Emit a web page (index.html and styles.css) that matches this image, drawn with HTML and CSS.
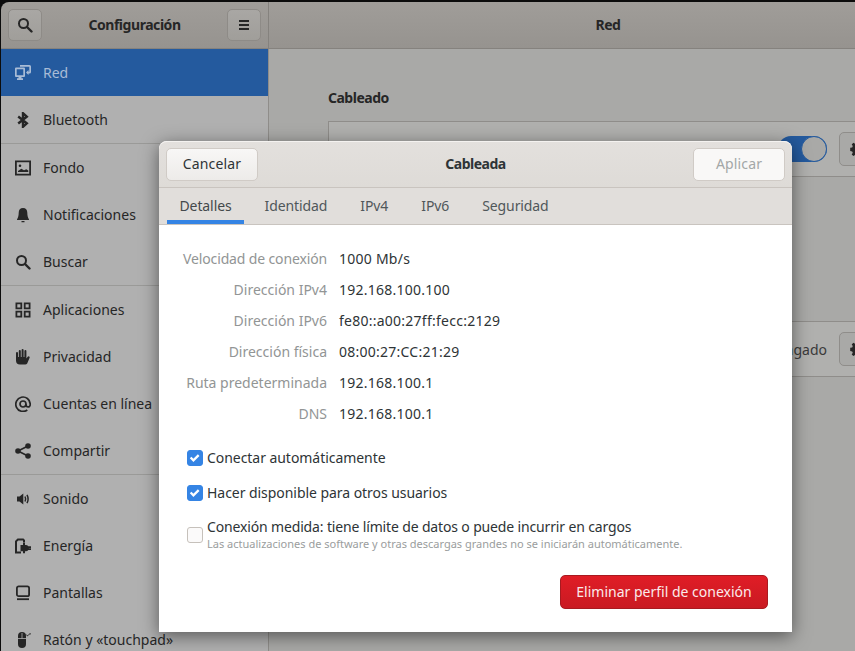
FILE: index.html
```html
<!DOCTYPE html>
<html lang="es">
<head>
    <meta charset="UTF-8">
    <title>Configuración - Red</title>
    <link rel="stylesheet" href="styles.css">
</head>
<body>
    <div class="window">
        <header class="headerbar">
            <div class="header-left">
                <button class="icon-button">
                    <svg class="icon" viewBox="0 0 16 16"><circle cx="6.5" cy="6.5" r="4.5" fill="none" stroke="currentColor" stroke-width="2"/><path d="M10 10l4.5 4.5" stroke="currentColor" stroke-width="2.4" stroke-linecap="round"/></svg>
                </button>
                <div class="header-title">Configuración</div>
                <button class="icon-button">
                    <svg class="icon" viewBox="0 0 16 16"><path d="M3 3h10v2H3zM3 7h10v2H3zM3 11h10v2H3z" fill="currentColor"/></svg>
                </button>
            </div>
            <div class="header-right">
                <div class="header-title">Red</div>
            </div>
        </header>

        <div class="content">
            <nav class="sidebar">
                <div class="nav-item selected">
                    <svg class="icon" viewBox="0 0 16 16"><path d="M0 3.500a1 1 0 0 1 1-1h8a1 1 0 0 1 1 1V11a1 1 0 0 1-1 1H6.500v1.300H8V15H2v-1.700h1.500V12H1a1 1 0 0 1-1-1zM1.700 4.200v6.100h6.600V4.200z" fill="currentColor" fill-rule="evenodd"/><path d="M5 0h9.500A1.500 1.500 0 0 1 16 1.500V7a1.500 1.500 0 0 1-1.500 1.500H13.500V10L11 7.500 13.500 5v1.800h.8V1.700H5z" fill="currentColor"/></svg>
                    <span>Red</span>
                </div>
                <div class="nav-item">
                    <svg class="icon" viewBox="0 0 16 16"><path d="M3.200 4.500L11.800 11.300 8 14.800V1.200l3.800 3.500L3.200 11.500" fill="none" stroke="currentColor" stroke-width="2.400"/></svg>
                    <span>Bluetooth</span>
                </div>
                <div class="nav-item divided">
                    <svg class="icon" viewBox="0 0 16 16"><path d="M0 .5h16v15H0zM1.800 2.300v11.400h12.400V2.300z" fill="currentColor" fill-rule="evenodd"/><circle cx="5" cy="5.800" r="1.300" fill="currentColor"/><path d="M3 11l3.300-2.300 2.700 1.500 2.300-1 2 1.300v1.500H3z" fill="currentColor"/></svg>
                    <span>Fondo</span>
                </div>
                <div class="nav-item">
                    <svg class="icon" viewBox="0 0 16 16"><path d="M8 1c2.800 0 4.300 2 4.300 4.800 0 3 .6 5 1.700 6.700v.5H2v-.5C3.100 10.800 3.700 8.800 3.700 5.800 3.700 3 5.200 1 8 1zM6.500 14h3v1.200h-3z" fill="currentColor"/></svg>
                    <span>Notificaciones</span>
                </div>
                <div class="nav-item">
                    <svg class="icon" viewBox="0 0 16 16"><circle cx="6.500" cy="6.500" r="4.500" fill="none" stroke="currentColor" stroke-width="2"/><path d="M10 10l4.500 4.500" stroke="currentColor" stroke-width="2.400" stroke-linecap="round"/></svg>
                    <span>Buscar</span>
                </div>
                <div class="nav-item divided">
                    <svg class="icon" viewBox="0 0 16 16"><path d="M.5.5h6.700v6.700H.5zM2.300 2.300v3.100h3.100V2.300zM8.800.5h6.700v6.700H8.800zM10.600 2.300v3.100h3.100V2.300zM.5 8.800h6.700v6.700H.5zM2.300 10.600v3.100h3.100v-3.100zM8.800 8.800h6.700v6.700H8.800zM10.600 10.600v3.100h3.100v-3.100z" fill="currentColor" fill-rule="evenodd"/></svg>
                    <span>Aplicaciones</span>
                </div>
                <div class="nav-item">
                    <svg class="icon" viewBox="0 0 16 16"><path d="M1 4a1 1 0 0 1 2 0v4h.8V2a1 1 0 0 1 2 0v6h.8V1a1 1 0 0 1 2 0v7h.8V2a1 1 0 0 1 2 0v7.500l1.300-1.800a1.100 1.100 0 0 1 1.800 1.300L12.200 14.500A2.500 2.500 0 0 1 10.200 15.500H5A4 4 0 0 1 1 11.500z" fill="currentColor"/></svg>
                    <span>Privacidad</span>
                </div>
                <div class="nav-item">
                    <svg class="icon" viewBox="0 0 16 16"><path d="M12.300 14A7.200 7.200 0 1 1 15.200 8v.8a2.100 2.100 0 0 1-4.200 0V8" fill="none" stroke="currentColor" stroke-width="1.700"/><circle cx="8" cy="8" r="3" fill="none" stroke="currentColor" stroke-width="1.700"/></svg>
                    <span>Cuentas en línea</span>
                </div>
                <div class="nav-item">
                    <svg class="icon" viewBox="0 0 16 16"><circle cx="3" cy="8" r="2.800" fill="currentColor"/><circle cx="13" cy="3" r="2.800" fill="currentColor"/><circle cx="13" cy="13" r="2.800" fill="currentColor"/><path d="M13 3L3 8l10 5" fill="none" stroke="currentColor" stroke-width="1.700"/></svg>
                    <span>Compartir</span>
                </div>
                <div class="nav-item divided">
                    <svg class="icon" viewBox="0 0 16 16"><path d="M2 5.500h2.500L8.300 2.500v11l-3.800-3H2z" fill="currentColor"/><path d="M10 5.500c.8 1.500.8 3.500 0 5M12 3.800c1.300 2.500 1.300 6 0 8.400" fill="none" stroke="currentColor" stroke-width="1.500"/></svg>
                    <span>Sonido</span>
                </div>
                <div class="nav-item">
                    <svg class="icon" viewBox="0 0 16 16"><path d="M0 3L2.500.5h6L10 2v2.500H8V2.500H3.300L2 3.800V13.500H6V15.500H0z" fill="currentColor"/><path d="M5.500 7H8V4.800h2V7h.8a3 3 0 0 1 2.500 1.300H16v1.600h-2.200v.4H16v1.600h-2.700a3 3 0 0 1-2.500 1.300H10v2H8v-2H5.500z" fill="currentColor"/></svg>
                    <span>Energía</span>
                </div>
                <div class="nav-item">
                    <svg class="icon" viewBox="0 0 16 16"><rect x="1.900" y="1.400" width="12.200" height="9.800" rx="1.800" fill="none" stroke="currentColor" stroke-width="1.800"/><path d="M2 13.300h12v1.800H2z" fill="currentColor"/></svg>
                    <span>Pantallas</span>
                </div>
                <div class="nav-item">
                    <svg class="icon" viewBox="0 0 16 16"><path d="M7 0a4 4 0 0 1 4 4v8a4 4 0 0 1-8 0V4a4 4 0 0 1 4-4z" fill="currentColor"/><path d="M3 6.500h8M7 1v5.500" stroke="#b0b0b0" stroke-width=".8"/><path d="M11 2.500c1 1.500 2 1.500 2.500.5s1.500-1.500 2.500-1" fill="none" stroke="currentColor"/></svg>
                    <span>Ratón y «touchpad»</span>
                </div>
            </nav>

            <main class="panel">
                <h2 class="panel-heading">Cableado</h2>
                <div class="card">
                    <div class="switch"><div class="switch-knob"></div></div>
                    <button class="gear-button">
                        <svg class="icon" viewBox="0 0 16 16"><path d="M6.800 1h2.400l.4 2 1.300.6 1.700-1.100 1.700 1.700-1.100 1.700.6 1.300 2 .4v2.400l-2 .4-.6 1.300 1.100 1.700-1.700 1.700-1.700-1.100-1.300.6-.4 2H6.800l-.4-2-1.300-.6-1.700 1.100-1.700-1.700 1.100-1.700-.6-1.300-2-.4V6.800l2-.4.6-1.300-1.100-1.700 1.700-1.700 1.700 1.100 1.300-.6zM8 5.800a2.200 2.200 0 1 0 0 4.400 2.200 2.200 0 0 0 0-4.400z" fill="currentColor" fill-rule="evenodd"/></svg>
                    </button>
                </div>
                <div class="card second-card">
                    <span class="card-status">Apagado</span>
                    <button class="gear-button">
                        <svg class="icon" viewBox="0 0 16 16"><path d="M6.800 1h2.400l.4 2 1.300.6 1.700-1.100 1.700 1.700-1.100 1.700.6 1.300 2 .4v2.400l-2 .4-.6 1.300 1.100 1.700-1.700 1.700-1.700-1.100-1.300.6-.4 2H6.800l-.4-2-1.300-.6-1.700 1.100-1.700-1.700 1.100-1.700-.6-1.300-2-.4V6.800l2-.4.6-1.300-1.100-1.700 1.700-1.700 1.700 1.100 1.300-.6zM8 5.800a2.200 2.200 0 1 0 0 4.400 2.200 2.200 0 0 0 0-4.400z" fill="currentColor" fill-rule="evenodd"/></svg>
                    </button>
                </div>
            </main>
        </div>
    </div>

    <div class="dialog">
        <div class="dialog-header">
            <button class="button">Cancelar</button>
            <div class="dialog-title">Cableada</div>
            <button class="button disabled">Aplicar</button>
        </div>
        <div class="tabs">
            <div class="tab active">Detalles</div>
            <div class="tab">Identidad</div>
            <div class="tab">IPv4</div>
            <div class="tab">IPv6</div>
            <div class="tab">Seguridad</div>
        </div>
        <div class="dialog-body">
            <div class="details">
                <div class="detail-label wide">Velocidad de conexión</div><div class="detail-value">1000 Mb/s</div>
                <div class="detail-label">Dirección IPv4</div><div class="detail-value">192.168.100.100</div>
                <div class="detail-label">Dirección IPv6</div><div class="detail-value">fe80::a00:27ff:fecc:2129</div>
                <div class="detail-label">Dirección física</div><div class="detail-value">08:00:27:CC:21:29</div>
                <div class="detail-label">Ruta predeterminada</div><div class="detail-value">192.168.100.1</div>
                <div class="detail-label">DNS</div><div class="detail-value">192.168.100.1</div>
            </div>

            <div class="check-row first-check">
                <div class="checkbox checked"><svg viewBox="0 0 16 16"><path d="M3 7.500l3.200 3.200 6-6" fill="none" stroke="#fff" stroke-width="2.600"/></svg></div>
                <span>Conectar automáticamente</span>
            </div>
            <div class="check-row second-check">
                <div class="checkbox checked"><svg viewBox="0 0 16 16"><path d="M3 7.500l3.200 3.200 6-6" fill="none" stroke="#fff" stroke-width="2.600"/></svg></div>
                <span>Hacer disponible para otros usuarios</span>
            </div>
            <div class="check-row metered">
                <div class="checkbox"></div>
                <div>
                    <div class="metered-title">Conexión medida: tiene límite de datos o puede incurrir en cargos</div>
                    <div class="metered-note">Las actualizaciones de software y otras descargas grandes no se iniciarán automáticamente.</div>
                </div>
            </div>

            <div class="dialog-actions">
                <button class="button danger">Eliminar perfil de conexión</button>
            </div>
        </div>
    </div>
</body>
</html>
```

FILE: styles.css
```css
* {
    margin: 0;
    padding: 0;
    box-sizing: border-box;
}

html, body {
    height: 100%;
    overflow: hidden;
}

body {
    font-family: "Noto Sans", sans-serif;
    font-size: 14px;
    color: #2e3436;
    background: #0c0c0c;
    padding: 2px 0 0 1px;
    position: relative;
}

button {
    font: inherit;
}

.icon {
    width: 16px;
    height: 16px;
    flex-shrink: 0;
}

.window {
    height: 649px;
    display: flex;
    flex-direction: column;
    border-top-left-radius: 8px;
    overflow: hidden;
}

.headerbar {
    height: 47px;
    display: flex;
    flex-shrink: 0;
    background: linear-gradient(#a09d99, #96938f);
    border-bottom: 1px solid #85827e;
}

.header-left {
    width: 268px;
    display: flex;
    align-items: center;
    justify-content: space-between;
    padding: 0 7px;
    border-right: 1px solid #85827e;
}

.header-right {
    flex: 1;
    display: flex;
    align-items: center;
    justify-content: center;
    padding-left: 92px;
}

.header-title {
    font-weight: 700;
    color: #262626;
    letter-spacing: -0.45px;
    padding-bottom: 2px;
}

.icon-button {
    width: 34px;
    height: 32px;
    display: flex;
    align-items: center;
    justify-content: center;
    color: #262626;
    background: linear-gradient(#a9a7a4, #a09e9a);
    border: 1px solid #8e8b87;
    border-radius: 5px;
}

.content {
    flex: 1;
    display: flex;
    min-height: 0;
}

.sidebar {
    width: 268px;
    flex-shrink: 0;
    background: #b0b0b0;
    border-right: 1px solid #8f8d8a;
    color: #262626;
}

.nav-item {
    height: 47px;
    display: flex;
    align-items: center;
    gap: 12px;
    padding-left: 14px;
}

.nav-item.divided {
    height: 48px;
    border-top: 1px solid #9a9a98;
}

.nav-item.selected {
    background: #245a9e;
    color: #a9bcd6;
}

.panel {
    flex: 1;
    background: #a9a9a7;
    padding: 39px 0 0 59px;
    overflow: hidden;
}

.panel-heading {
    font-size: 14px;
    font-weight: 700;
    line-height: 20px;
    letter-spacing: -0.5px;
    margin-bottom: 13px;
    color: #262626;
}

.card {
    width: 562px;
    height: 56px;
    display: flex;
    align-items: center;
    justify-content: flex-end;
    gap: 12px;
    padding-right: 12px;
    background: #b0b0ae;
    border: 1px solid #8f8d8a;
}

.second-card {
    margin-top: 144px;
}

.card-status {
    color: #3a3a3a;
}

.switch {
    width: 49px;
    height: 26px;
    background: #245a9e;
    border-radius: 13px;
    display: flex;
    justify-content: flex-end;
}

.switch-knob {
    width: 26px;
    height: 26px;
    background: #a9a9a7;
    border: 1px solid #245a9e;
    border-radius: 50%;
}

.gear-button {
    width: 38px;
    height: 34px;
    display: flex;
    align-items: center;
    justify-content: center;
    color: #262626;
    background: #a9a9a7;
    border: 1px solid #8f8d8a;
    border-radius: 5px;
}

/* dialog sits over the dimmed window */
.dialog {
    position: absolute;
    left: 159px;
    top: 141px;
    width: 633px;
    height: 491px;
    display: flex;
    flex-direction: column;
    background: #fff;
    border-radius: 8px 8px 0 0;
    box-shadow: 0 4px 18px rgba(0, 0, 0, 0.5);
}

.dialog-header {
    height: 47px;
    flex-shrink: 0;
    display: flex;
    align-items: center;
    justify-content: space-between;
    padding: 0 7px;
    background: linear-gradient(#e3e0dd, #dedbd7);
    border-top: 1px solid #f4f2f0;
    border-bottom: 1px solid #c9c4bf;
    border-radius: 8px 8px 0 0;
}

.dialog-title {
    flex: 1;
    text-align: center;
    font-weight: 700;
    letter-spacing: -0.5px;
    padding-bottom: 2px;
}

.button {
    width: 92px;
    height: 33px;
    padding-bottom: 2px;
    letter-spacing: 0.15px;
    color: #2e3436;
    background: linear-gradient(#f8f7f6, #edebe9);
    border: 1px solid #d0cbc6;
    border-radius: 5px;
}

.button.disabled {
    color: #a3a7a7;
    background: #f9f8f7;
}

.tabs {
    height: 37px;
    flex-shrink: 0;
    display: flex;
    gap: 8px;
    padding: 0 8px;
    background: #e1dedb;
    border-bottom: 1px solid #c9c4bf;
}

.tab {
    padding: 0 12.5px;
    line-height: 36px;
    letter-spacing: -0.1px;
    color: #50575a;
}

.tab.active {
    color: #44494b;
    box-shadow: inset 0 -4px 0 #3584e4;
}

.dialog-body {
    flex: 1;
    padding: 18px 24px 0 24px;
}

.details {
    display: grid;
    grid-template-columns: 144px auto;
    grid-auto-rows: 31px;
    column-gap: 12px;
    align-items: center;
    justify-content: start;
}

.detail-label {
    text-align: right;
    color: #929595;
    white-space: nowrap;
}

.detail-label.wide {
    letter-spacing: -0.14px;
}

.detail-value {
    letter-spacing: 0.25px;
}

.check-row {
    display: flex;
    align-items: center;
    gap: 4px;
    padding-left: 4px;
    letter-spacing: -0.05px;
}

.first-check {
    margin-top: 19px;
}

.second-check {
    margin-top: 16px;
}

.metered {
    margin-top: 16px;
}

.checkbox {
    width: 16px;
    height: 16px;
    flex-shrink: 0;
    border: 1px solid #c6c1bb;
    border-radius: 3px;
    background: #fbfafa;
}

.checkbox.checked {
    background: #3584e4;
    border-color: #3584e4;
}

.checkbox svg {
    display: block;
    width: 14px;
    height: 14px;
}

.metered-title {
    line-height: 18px;
    letter-spacing: -0.15px;
    white-space: nowrap;
}

.metered-note {
    font-size: 11px;
    line-height: 16px;
    letter-spacing: 0;
    color: #9a9d9d;
    white-space: nowrap;
}

.dialog-actions {
    display: flex;
    justify-content: flex-end;
    margin-top: 23px;
}

.button.danger {
    width: 208px;
    height: 34px;
    letter-spacing: 0;
    color: #fbeaea;
    background: linear-gradient(#e01d26, #c91a22);
    border-color: #a81a20;
}
```
